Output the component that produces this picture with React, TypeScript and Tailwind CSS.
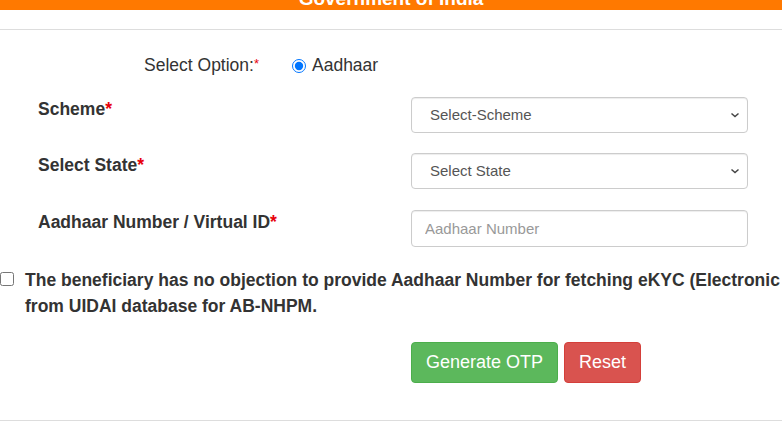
import { useState } from 'react';

function Chevron() {
	return (
		<svg
			width="12"
			height="12"
			viewBox="0 0 12 12"
			className="pointer-events-none absolute right-[7px] top-1/2 -translate-y-1/2"
		>
			<path d="M2.5 4.5 L6 7.5 L9.5 4.5" fill="none" stroke="#444" strokeWidth="1.5" />
		</svg>
	);
}

export default function App() {
	const [scheme, setScheme] = useState('');
	const [state, setState] = useState('');
	const [aadhaar, setAadhaar] = useState('');
	const [agree, setAgree] = useState(false);

	return (
		<div
			className="h-[431px] w-[782px] overflow-hidden bg-white text-[#333]"
			style={{ fontFamily: '"Liberation Sans", Arial, sans-serif' }}
		>
			{/* top banner, scrolled so only the bottom shows */}
			<div className="h-[10px] overflow-hidden bg-[#ff7900]">
				<div className="-mt-[11px] text-center text-[19px] font-bold leading-[20px] text-white">
					Government of India
				</div>
			</div>
			<div className="h-[20px] border-b border-[#dddddd]" />

			<form className="relative" onSubmit={(e) => e.preventDefault()}>
				{/* option row */}
				<div className="flex h-[67px] items-center pt-[4px]">
					<div className="w-[262px] pr-[3px] text-right text-[17.5px]">
						Select Option:<span className="relative -top-[3px] text-[13px] text-red-600">*</span>
					</div>
					<label className="ml-[30px] flex items-center gap-[6px] text-[17.5px]">
						<input
							type="radio"
							name="opt"
							defaultChecked
							className="m-0 h-[14px] w-[14px] accent-[#0075ff]"
						/>
						Aadhaar
					</label>
				</div>

				<div className="flex flex-col gap-[20px]">
					<div className="flex items-start">
						<div className="w-[411px] pl-[38px] pt-[1px] text-[17.5px] font-bold leading-[22px]">
							Scheme<span className="text-red-600">*</span>
						</div>
						<div className="relative w-[337px]">
							<select
								value={scheme}
								onChange={(e) => setScheme(e.target.value)}
								className="h-[36px] w-full appearance-none rounded-[4px] border border-[#cccccc] bg-white pl-[18px] text-[15px] text-[#555] shadow-[inset_0_1px_1px_rgba(0,0,0,0.075)]"
							>
								<option value="">Select-Scheme</option>
								<option value="pmjay">AB-PMJAY</option>
							</select>
							<Chevron />
						</div>
					</div>

					<div className="flex items-start">
						<div className="w-[411px] pl-[38px] pt-[1px] text-[17.5px] font-bold leading-[22px]">
							Select State<span className="text-red-600">*</span>
						</div>
						<div className="relative w-[337px]">
							<select
								value={state}
								onChange={(e) => setState(e.target.value)}
								className="h-[36px] w-full appearance-none rounded-[4px] border border-[#cccccc] bg-white pl-[18px] text-[15px] text-[#555] shadow-[inset_0_1px_1px_rgba(0,0,0,0.075)]"
							>
								<option value="">Select State</option>
								<option value="dl">Delhi</option>
							</select>
							<Chevron />
						</div>
					</div>

					<div className="mt-[1px] flex items-start">
						<div className="w-[411px] pl-[38px] pt-[1px] text-[17.5px] font-bold leading-[22px]">
							Aadhaar Number / Virtual ID<span className="text-red-600">*</span>
						</div>
						<input
							type="text"
							value={aadhaar}
							onChange={(e) => setAadhaar(e.target.value)}
							placeholder="Aadhaar Number"
							className="h-[37px] w-[337px] rounded-[4px] border border-[#cccccc] bg-white px-[13px] text-[15px] text-[#555] shadow-[inset_0_1px_1px_rgba(0,0,0,0.075)] placeholder:text-[#999]"
						/>
					</div>
				</div>

				{/* consent: the first line runs past the window edge */}
				<label className="mt-[20px] flex w-[900px] items-start">
					<input
						type="checkbox"
						checked={agree}
						onChange={(e) => setAgree(e.target.checked)}
						className="m-0 mt-[5px] h-[14px] w-[14px]"
					/>
					<span className="ml-[11px] text-[17.5px] font-bold leading-[26px]">
						<span className="block whitespace-nowrap">
							The beneficiary has no objection to provide Aadhaar Number for fetching eKYC (Electronic
						</span>
						<span className="block">from UIDAI database for AB-NHPM.</span>
					</span>
				</label>

				<div className="mt-[23px] flex gap-[6px] pl-[411px]">
					<button
						type="submit"
						className="h-[41px] rounded-[4px] border border-[#4cae4c] bg-[#5cb85c] px-[14px] text-[18px] text-white"
					>
						Generate OTP
					</button>
					<button
						type="reset"
						className="h-[41px] rounded-[4px] border border-[#d43f3a] bg-[#d9534f] px-[14px] text-[18px] text-white"
					>
						Reset
					</button>
				</div>
			</form>

			<div className="mt-[37px] border-b border-[#dddddd]" />
		</div>
	);
}
